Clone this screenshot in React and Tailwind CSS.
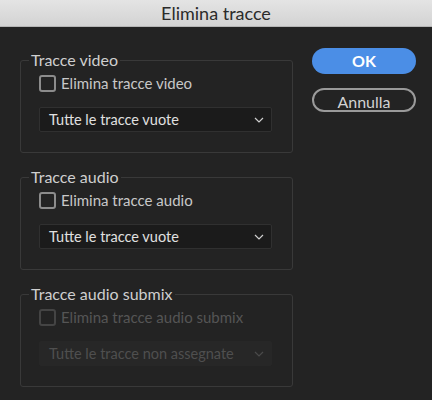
import React from "react";

const font = { fontFamily: "Lato, 'Liberation Sans', sans-serif" };

const Chevron = ({ className }) => (
  <svg viewBox="0 0 10 6" className={className} fill="none" stroke="currentColor" strokeWidth="1.2">
    <path d="M1 1l4 4 4-4" />
  </svg>
);

const Group = ({ title, label, option, disabled }) => (
  <fieldset className="border border-[#393939] rounded-[3px] px-[8px] pb-[20px] min-w-0">
    <legend className="px-[2px] text-[16px] leading-[20px] text-[#cfcfcf]">{title}</legend>
    <div className="pl-[10px] pr-[20px]">
      <label className="flex items-center gap-[5px] mt-[5px] h-[17px]">
        <span
          className={
            "w-[17px] h-[17px] rounded-[3px] border-2 " +
            (disabled ? "border-[#444444]" : "border-[#8c8c8c]")
          }
        />
        <span className={"text-[15px] leading-[17px] " + (disabled ? "text-[#555555]" : "text-[#c8c8c8]")}>
          {label}
        </span>
      </label>
      <div
        className={
          "mt-[15px] h-[25px] w-[233px] rounded-[2px] border flex items-center justify-between pl-[9px] pr-[7px] " +
          (disabled
            ? "bg-[#272727] border-[#272727] text-[#4f4f4f]"
            : "bg-[#1b1b1b] border-[#303030] text-[#e0e0e0]")
        }
      >
        <span className="text-[14.5px] leading-[20px]">{option}</span>
        <Chevron className={"w-[10px] h-[6px] " + (disabled ? "text-[#4a4a4a]" : "text-[#cfcfcf]")} />
      </div>
    </div>
  </fieldset>
);

export default function App() {
  return (
    <div className="w-[432px] h-[400px] bg-[#232323] flex flex-col overflow-hidden" style={font}>
      <div className="h-[27px] bg-gradient-to-b from-[#e4e4e4] to-[#d3d3d3] border-b border-[#b5b5b5] flex items-center justify-center">
        <span className="text-[18px] text-[#2b2b2b]">Elimina tracce</span>
      </div>
      <div className="flex pt-[21px] pl-[20px] pr-[16px]">
        <div className="w-[273px] flex flex-col gap-[14px] pt-[2px]">
          <Group title="Tracce video" label="Elimina tracce video" option="Tutte le tracce vuote" />
          <Group title="Tracce audio" label="Elimina tracce audio" option="Tutte le tracce vuote" />
          <Group
            title="Tracce audio submix"
            label="Elimina tracce audio submix"
            option="Tutte le tracce non assegnate"
            disabled
          />
        </div>
        <div className="ml-[19px] flex-1 flex flex-col gap-[14px]">
          <button className="h-[26px] rounded-full bg-[#4b8ee6] text-white text-[16px] font-bold">OK</button>
          <button className="h-[24px] rounded-full border-2 border-[#9a9a9a] text-[#d2d2d2] text-[16px]">
            Annulla
          </button>
        </div>
      </div>
    </div>
  );
}
